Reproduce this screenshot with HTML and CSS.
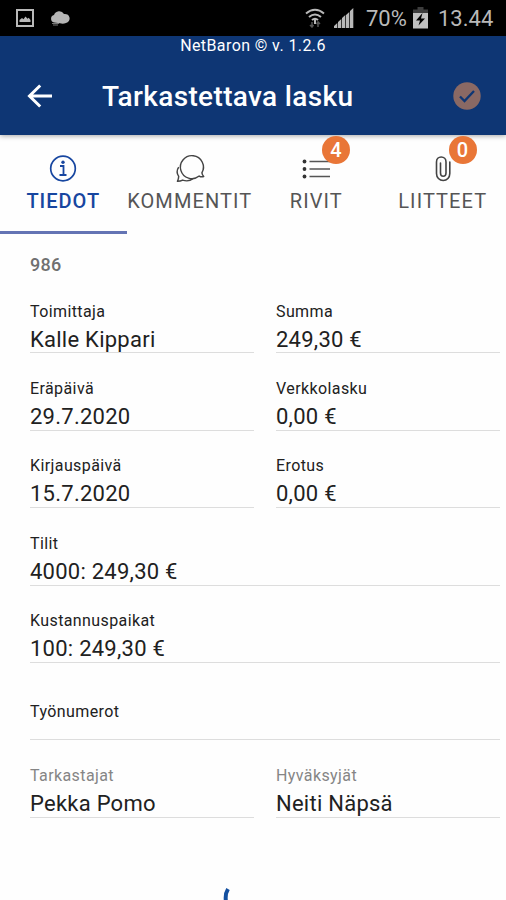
FILE: index.html
```html
<!DOCTYPE html>
<html lang="fi">
<head>
<meta charset="utf-8">
<title>Tarkastettava lasku</title>
<link rel="stylesheet" href="styles.css">
</head>
<body>
<div class="status">
  <svg class="st-image" width="18" height="18" viewBox="0 0 18 18"><rect x="1" y="1" width="16" height="16" fill="none" stroke="#b9b9b9" stroke-width="2"/><path d="M3.5 13v-2l2.5-2 1.5 1.200L9.500 7.500l2 2.200 1.200-1L14.500 11v2z" fill="#b9b9b9"/></svg>
  <svg class="st-cloud" width="20" height="15" viewBox="0 0 20 15"><path d="M4 11.500a3.800 3.800 0 0 1 0-7.400A5.500 5.500 0 0 1 14 3a4.400 4.400 0 0 1 2 9c-2 .8-4 .8-6 .3z" fill="#b5b5b5"/><path d="M2 12.500h7M3 14h5" stroke="#777" stroke-width="1"/></svg>
  <svg class="st-wifi" width="20" height="20" viewBox="0 0 20 20" fill="none"><g stroke="#b9b9b9" stroke-width="2"><path d="M1 5.500q9-7.500 18 0M4 9q6-5 12 0M7 12q3-2.500 6 0"/></g><path d="M10 11v5" stroke="#b9b9b9" stroke-width="2"/><path d="M7 14v5m-2-2 2 2 1.500-2M13 19v-5m-1.500 2 1.500-2 2 2" stroke="#555" stroke-width="1.500"/></svg>
  <svg class="st-signal" width="20" height="20" viewBox="0 0 20 20" fill="#b9b9b9"><path d="M0 20v-2l3.300-3v5zM4 20v-6l3.300-3v9zM8 20V10l3.300-3v13zM12 20V7l3.300-3v16zM16 20V3l3.300-3v20z"/></svg>
  <span class="pct">70%</span>
  <svg class="st-battery" width="15" height="22" viewBox="0 0 15 22"><path d="M4.500 0h6v2.500H15V7H0V2.500h4.500z" fill="#3d3d3d"/><path d="M0 6h15v15.500H0z" fill="#c0c0c0"/><path d="M9.500 6 3 13.500h4l-1.500 5L12 11.500H8z" fill="#000"/></svg>
  <span class="clock">13.44</span>
</div>
<header class="header">
  <div class="version">NetBaron © v. 1.2.6</div>
  <div class="toolbar">
    <svg class="back" width="26" height="24" viewBox="0 0 26 24" fill="none" stroke="#fff" stroke-width="3"><path d="M25 12H3M13.200 1.500 2.500 12l10.700 10.500"/></svg>
    <h1 class="title">Tarkastettava lasku</h1>
    <svg class="approve" width="28" height="28" viewBox="0 0 28 28"><circle cx="14" cy="14" r="13.700" fill="#8a6964"/><path d="m7 14.500 4.500 4.500L21 9" fill="none" stroke="#0e3674" stroke-width="2.300"/></svg>
  </div>
</header>
<nav class="tabs">
  <div class="tab active">
    <svg width="28" height="28" viewBox="0 0 28 28" fill="none" stroke="#1746a0"><circle cx="14" cy="14" r="12.300" stroke-width="1.700"/><path d="M11 11.500h3.500V20M10.500 20.500h7" stroke-width="1.800"/><circle cx="14" cy="7.800" r="1.700" fill="#1746a0" stroke="none"/></svg>
    <span>TIEDOT</span>
  </div>
  <div class="tab">
    <svg width="32" height="30" viewBox="0 0 32 30" fill="none" stroke="#444" stroke-width="1.500" stroke-linejoin="round"><path d="M28.300 19.500A11.900 11.900 0 1 0 25.500 22.800c1.400.8 3 1 4.700.5-.9-.9-1.500-2-1.900-3.800z"/><path d="M4.300 13.500c-2 3-1.900 6.800 0 9.700-.1 2-.5 3.400-1.300 5 2.200 0 3.900-.4 5.400-1.200 3.800 1.300 7.600 1 10.600-1.500"/></svg>
    <span>KOMMENTIT</span>
  </div>
  <div class="tab">
    <svg width="28" height="28" viewBox="0 0 28 28" fill="none" stroke="#555" stroke-width="1.600"><path d="M7.500 7H28M7.500 14.500H28M7.500 22H28"/><g fill="#333" stroke="none"><circle cx="2.500" cy="7" r="1.900"/><circle cx="2.500" cy="14.500" r="1.900"/><circle cx="2.500" cy="22" r="1.900"/></g></svg>
    <span>RIVIT</span>
    <b class="badge">4</b>
  </div>
  <div class="tab">
    <svg width="28" height="28" viewBox="0 0 28 28" fill="none" stroke="#444" stroke-width="1.600" stroke-linecap="round"><path d="M20.800 7.500V19c0 4-2.800 7-6.600 7s-6.700-3-6.700-7V7.500c0-3 2-5 4.700-5S17 4.500 17 7.500v11c0 2-1 3.300-2.800 3.300S11.500 20.500 11.500 18.500V8.500"/></svg>
    <span>LIITTEET</span>
    <b class="badge">0</b>
  </div>
</nav>
<main class="content">
  <div class="number">986</div>
  <div class="grid">
    <div class="field"><label>Toimittaja</label><p>Kalle Kippari</p></div>
    <div class="field"><label>Summa</label><p>249,30 €</p></div>
    <div class="field"><label>Eräpäivä</label><p>29.7.2020</p></div>
    <div class="field"><label>Verkkolasku</label><p>0,00 €</p></div>
    <div class="field"><label>Kirjauspäivä</label><p>15.7.2020</p></div>
    <div class="field"><label>Erotus</label><p>0,00 €</p></div>
    <div class="field wide"><label>Tilit</label><p>4000: 249,30 €</p></div>
    <div class="field wide"><label>Kustannuspaikat</label><p>100: 249,30 €</p></div>
    <div class="field wide empty"><label>Työnumerot</label></div>
    <div class="field muted"><label>Tarkastajat</label><p>Pekka Pomo</p></div>
    <div class="field muted"><label>Hyväksyjät</label><p>Neiti Näpsä</p></div>
  </div>
  <svg class="spinner" width="60" height="14" viewBox="0 0 60 14"><path d="M5 2Q1.800 7 3 15" fill="none" stroke="#1450a0" stroke-width="4"/></svg>
</main>
</body>
</html>
```
FILE: styles.css
```css
* { box-sizing: border-box; }
body { margin: 0; height: 900px; overflow: hidden; background: #fefefe; color: #212121; font-family: Roboto, sans-serif; }
svg { display: block; flex: none; }
p, h1 { margin: 0; }

.status { display: flex; height: 36px; padding: 0 12px 0 16px; align-items: center; background: #000; color: #b9b9b9; font-size: 22px; line-height: 36px; white-space: nowrap; }
.st-cloud { margin-left: 16px; }
.st-wifi { margin-left: auto; }
.st-signal { margin-left: 9px; }
.pct { width: 41px; margin-left: 12px; padding-top: 2px; }
.st-battery { margin-left: 6px; }
.clock { width: 56px; margin-left: 10px; padding-top: 2px; }

.header { position: relative; z-index: 1; height: 99px; background: #0e3674; color: #fff; box-shadow: 0 1px 5px rgba(0, 0, 0, .35); }
.version { height: 20px; line-height: 19px; text-align: center; font-size: 16px; letter-spacing: .4px; }
.toolbar { display: flex; align-items: center; height: 80px; padding: 0 25px 0 27px; }
.title { margin-left: 49px; padding-top: 2px; font-size: 28px; font-weight: 500; line-height: 36px; letter-spacing: .35px; }
.approve { margin-left: auto; }

.tabs { position: relative; z-index: 2; display: grid; grid-template-columns: repeat(4, 1fr); height: 99px; }
.tab { position: relative; display: flex; flex-direction: column; align-items: center; padding-top: 19px; color: #555; font-size: 20px; letter-spacing: 1.1px; border-bottom: 3px solid transparent; }
.tab svg { height: 29px; }
.tab span { line-height: 24px; margin-top: 6px; }
.tab.active { color: #1746a0; border-color: #6474b4; }
.tab.active span { font-weight: 500; letter-spacing: 1px; }
.badge { position: absolute; top: 1px; left: 69px; width: 28px; height: 28px; border-radius: 50%; background: #e97637; color: #fff; font-size: 20px; font-weight: 500; line-height: 29px; text-align: center; letter-spacing: 0; }

.content { padding: 18px 6px 0 30px; }
.number { height: 24px; color: #707070; font-size: 18px; font-weight: 500; line-height: 26px; letter-spacing: .3px; }
.grid { display: grid; grid-template-columns: 1fr 1fr; column-gap: 22px; grid-auto-rows: 77.400px; }
.field { padding-top: 25.500px; border-bottom: 1.500px solid #ddd; }
.field label { display: block; height: 20px; font-size: 16px; line-height: 20px; letter-spacing: .4px; }
.field p { margin-top: 4px; font-size: 22px; line-height: 28px; letter-spacing: .25px; }
.wide { grid-column: 1 / -1; }
.empty { padding-top: 39px; }
.muted label { color: #858585; }
.spinner { margin: 69px 0 0 193px; }
```
